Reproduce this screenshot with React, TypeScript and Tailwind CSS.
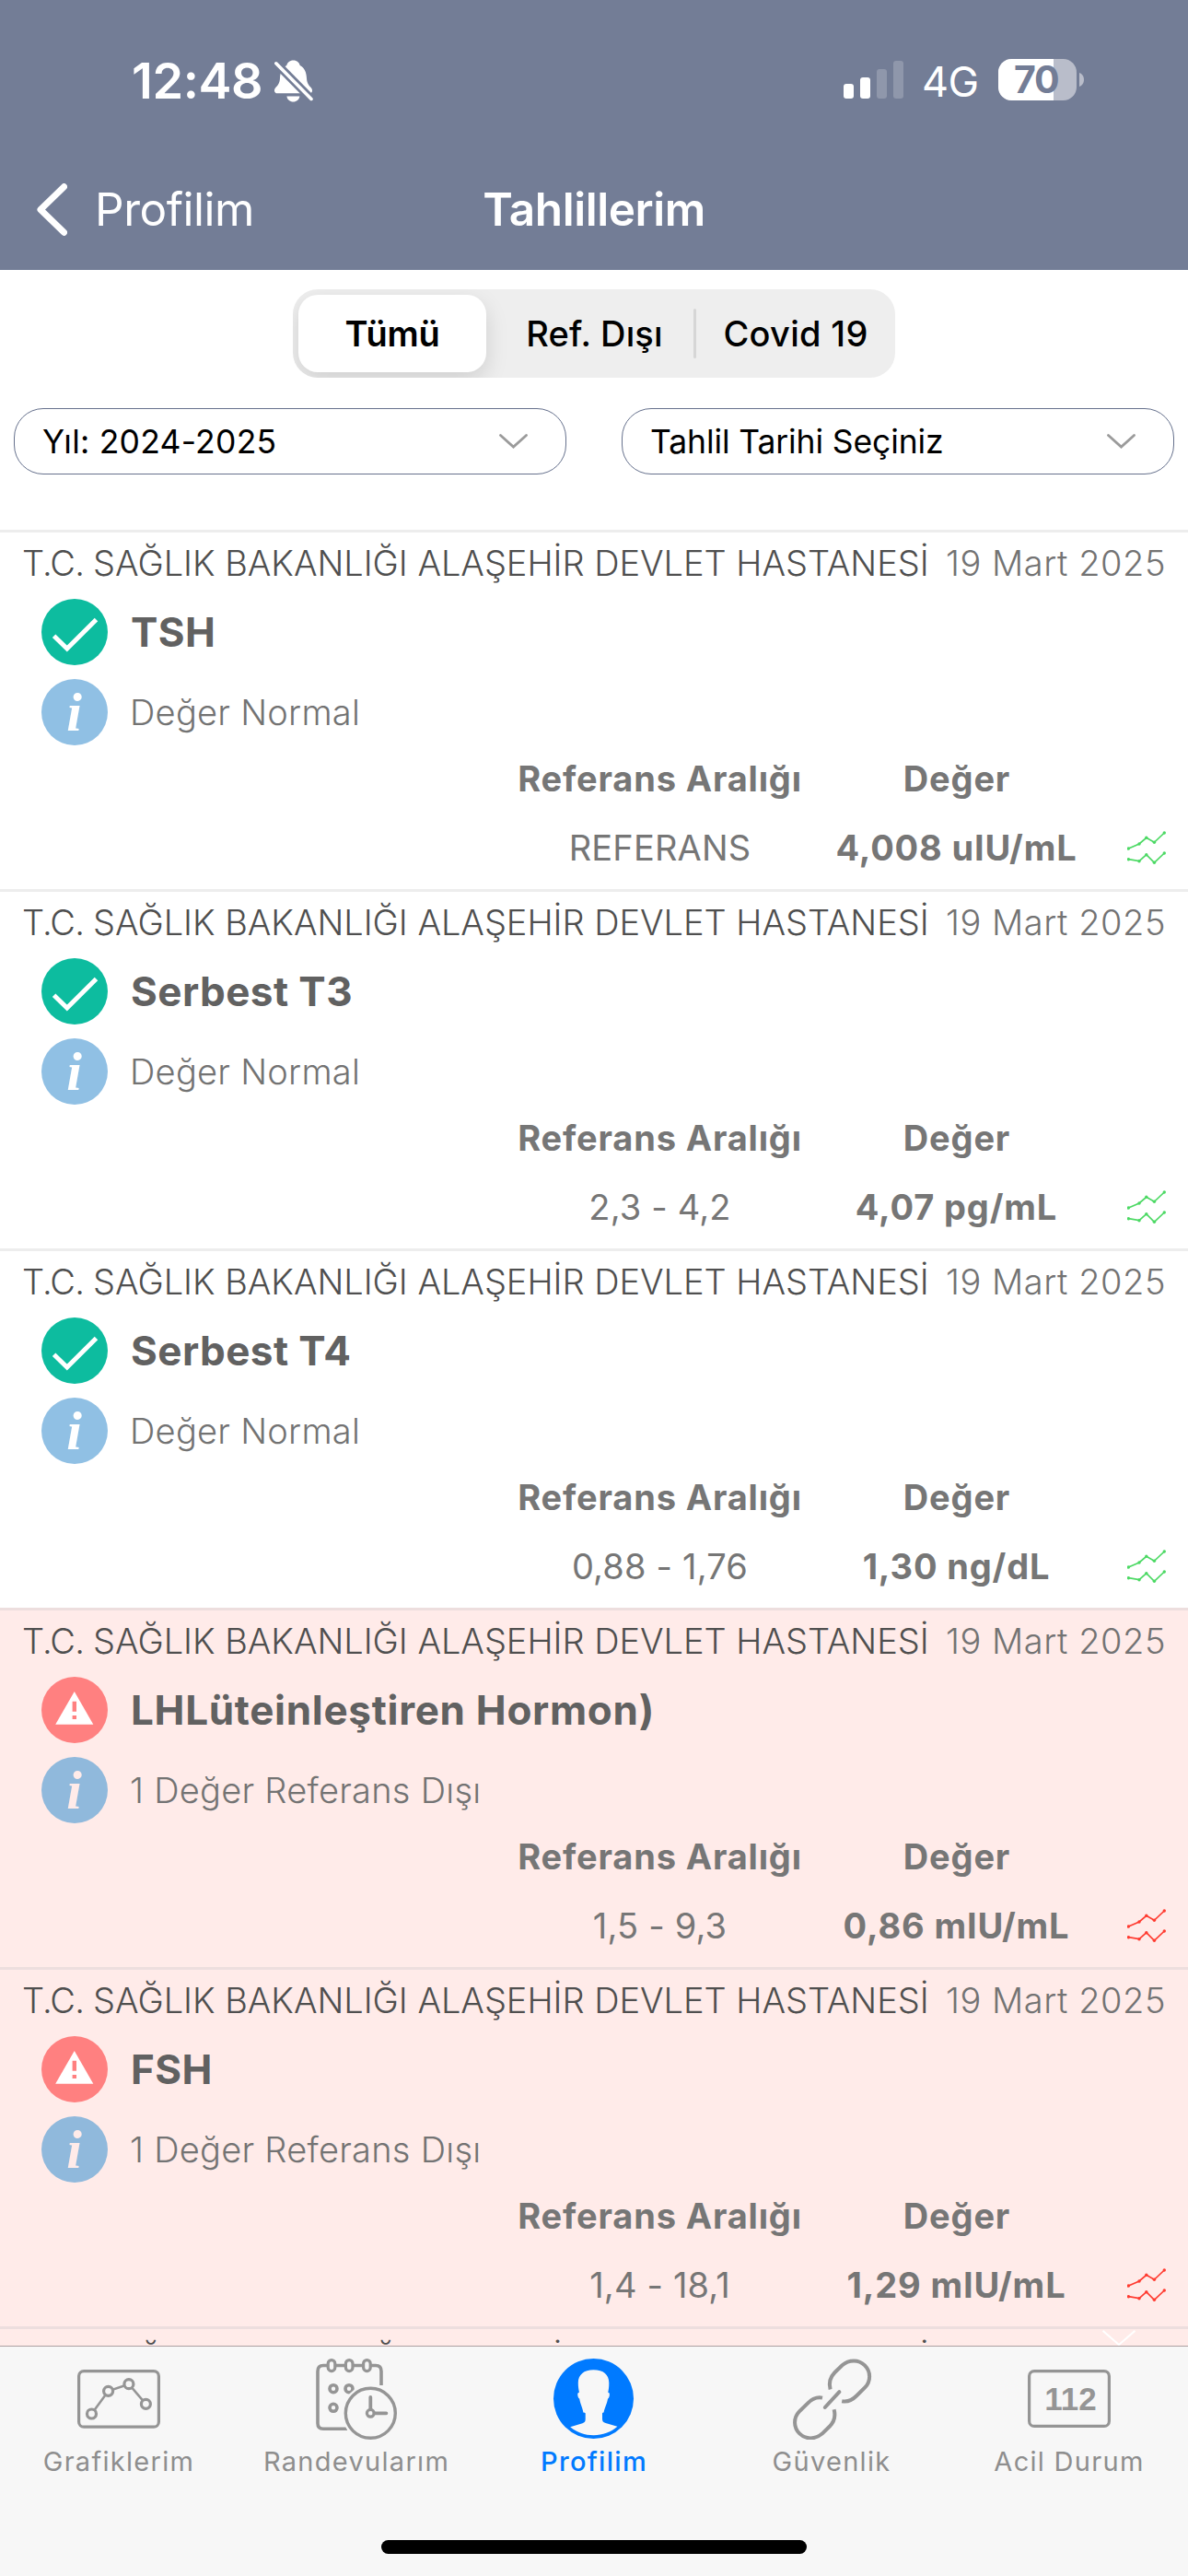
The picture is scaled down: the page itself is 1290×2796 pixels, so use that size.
import React from 'react';
import clsx from 'clsx';

interface TestResult {
  name: string;
  note: string;
  range: string;
  value: string;
  abnormal?: boolean;
}

const HOSPITAL = 'SAĞLIK BAKANLIĞI ALAŞEHİR DEVLET HASTANESİ';
const DATE = '19 Mart 2025';

const results: TestResult[] = [
  { name: 'TSH', note: 'Değer Normal', range: 'REFERANS', value: '4,008 uIU/mL' },
  { name: 'Serbest T3', note: 'Değer Normal', range: '2,3 - 4,2', value: '4,07 pg/mL' },
  { name: 'Serbest T4', note: 'Değer Normal', range: '0,88 - 1,76', value: '1,30 ng/dL' },
  {
    name: 'LHLüteinleştiren Hormon)',
    note: '1 Değer Referans Dışı',
    range: '1,5 - 9,3',
    value: '0,86 mIU/mL',
    abnormal: true,
  },
  { name: 'FSH', note: '1 Değer Referans Dışı', range: '1,4 - 18,1', value: '1,29 mIU/mL', abnormal: true },
];

function BellOff() {
  return (
    <svg className="mt-[3px] h-[46px] w-[42px]" viewBox="0 0 42 46" fill="none">
      <path
        d="M20.5 .5C16.5 .5 13.8 3 13.3 6C8.5 8.5 6.2 13.5 6 20C5.8 26 3 28 1 30.5C-1 33 0 36.3 3.2 36.3H37.8C41 36.3 42 33 40 30.5C38 28 35.2 26 35 20C34.8 13.5 32.5 8.5 27.7 6C27.2 3 24.5 .5 20.5 .5Z"
        fill="#fff"
      />
      <path d="M13.4 39.5H27.4C27 43 24 45.5 20.4 45.5S13.8 43 13.4 39.5Z" fill="#fff" />
      <path d="M-1 .8L42 44.4" stroke="#737d96" strokeWidth="9" />
      <path d="M1.8 3.8L40 42.4" stroke="#fff" strokeWidth="3.6" strokeLinecap="round" />
    </svg>
  );
}

function Battery() {
  return (
    <svg className="ml-5 h-[45px] w-[93px]" viewBox="0 0 93 45">
      <clipPath id="battery">
        <rect width="85" height="45" rx="14.5" />
      </clipPath>
      <g clipPath="url(#battery)">
        <rect width="85" height="45" fill="#b9bdca" />
        <rect width="60" height="45" fill="#fff" />
      </g>
      <path d="M88 15C91 16 93 19 93 22.5S91 29 88 30Z" fill="#b9bdca" />
      <text
        x="17"
        y="37"
        fill="#737d96"
        className="font-['Inter',sans-serif] text-[41px] font-bold tracking-[-1.2px]"
      >
        70
      </text>
    </svg>
  );
}

function Header() {
  return (
    <header className="h-[293px] shrink-0 bg-[#737d96] text-white">
      <div className="flex h-[173px] items-center pr-[113px] pl-[143px]">
        <span className="w-[155px] pt-[2px] text-[54px] leading-[64px] font-semibold tracking-[-0.42px]">12:48</span>
        <BellOff />
        <svg className="ml-auto h-[41px] w-[65px]" viewBox="0 0 65 41" fill="#fff">
          <rect y="25" width="11" height="16" rx="3" />
          <rect x="18" y="18" width="11" height="23" rx="3" />
          <rect x="36" y="9" width="11" height="32" rx="3" opacity=".2" />
          <rect x="54" width="11" height="41" rx="3" opacity=".2" />
        </svg>
        <span className="ml-5 w-[63px] pt-[5px] text-[45px] leading-[54px] tracking-[-0.57px]">4G</span>
        <Battery />
      </div>
      <div className="grid h-[120px] grid-cols-[1fr_auto_1fr] items-center pb-3 text-[49.5px] leading-[60px]">
        <div className="flex items-center gap-[30px] pl-10">
          <svg className="h-[57px] w-[33px]" viewBox="0 0 33 57" fill="none">
            <path
              d="M29.5 3.7L4 28.5L29.5 53.3"
              stroke="#fff"
              strokeWidth="7"
              strokeLinecap="round"
              strokeLinejoin="round"
            />
          </svg>
          <span className="tracking-[-0.48px]">Profilim</span>
        </div>
        <h1 className="font-semibold tracking-[-0.45px]">Tahlillerim</h1>
      </div>
    </header>
  );
}

function Select({ label, className }: { label: string; className: string }) {
  return (
    <div className="flex h-[72px] w-[600px] items-center justify-between rounded-[32px] border border-[#66718d] pr-[41px] pl-[30px]">
      <span className={clsx('pt-[2px] text-[35.5px] leading-[44px]', className)}>{label}</span>
      <svg className="h-4 w-[31px]" viewBox="0 0 31 16" fill="none">
        <path d="M1.5 1.5L15.5 14L29.5 1.5" stroke="#9b9b9b" strokeWidth="2.8" strokeLinecap="round" />
      </svg>
    </div>
  );
}

function Filters() {
  return (
    <section className="h-[282px] pt-[21px] text-black">
      <div className="mx-auto flex h-24 w-[654px] items-center overflow-hidden rounded-[27px] bg-[#eeeeee] text-[38px] leading-[46px] font-medium">
        <div className="w-[218px] pr-2 pl-[6px]">
          <div className="flex h-[84px] items-center justify-center rounded-[21px] bg-white font-semibold tracking-[-0.21px] shadow-[0_9px_24px_rgba(0,0,0,0.13)]">
            Tümü
          </div>
        </div>
        <div className="w-[217px] pl-[2px] text-center tracking-[0.17px]">Ref. Dışı</div>
        <div className="h-[54px] w-[3px] rounded-full bg-[#d6d6d6]" />
        <div className="flex-1 text-center tracking-[0.3px]">Covid 19</div>
      </div>
      <div className="mt-[33px] flex justify-between px-[15px]">
        <Select label="Yıl: 2024-2025" className="tracking-[0.24px]" />
        <Select label="Tahlil Tarihi Seçiniz" className="tracking-[-0.11px]" />
      </div>
    </section>
  );
}

function StatusIcon({ abnormal }: { abnormal?: boolean }) {
  if (abnormal) {
    return (
      <svg className="size-[72px]" viewBox="0 0 72 72">
        <circle cx="36" cy="36" r="36" fill="#ff8080" />
        <path d="M35.8 16L56.3 51.8H15.2Z" fill="#fff" />
        <path d="M33.6 26.7h4.4v11h-4.4zM33.6 42h4.4v4h-4.4z" fill="#ff8080" />
      </svg>
    );
  }
  return (
    <svg className="size-[72px]" viewBox="0 0 72 72" fill="none">
      <circle cx="36" cy="36" r="36" fill="#0dbc9f" />
      <path d="M13.6 40.2L27.8 54L59.5 22.4" stroke="#fff" strokeWidth="5" />
    </svg>
  );
}

function InfoIcon({ abnormal }: { abnormal?: boolean }) {
  return (
    <svg className="size-[72px]" viewBox="0 0 72 72">
      <circle cx="36" cy="36" r="36" fill={abnormal ? '#90b9dc' : '#90c0e4'} />
      <text
        x="35.5"
        y="56"
        textAnchor="middle"
        fill={abnormal ? '#ffebe9' : '#fff'}
        className="font-['Liberation_Serif',serif] text-[60px] font-bold italic"
      >
        i
      </text>
    </svg>
  );
}

function TrendIcon({ abnormal }: { abnormal?: boolean }) {
  const upper = [[1.4, 19], [13, 14], [20.8, 7.3], [29.4, 12.3], [40.3, 2]];
  const lower = [[1.4, 30.7], [13, 32.7], [20.8, 25.7], [29.4, 34.3], [40.3, 24]];
  const color = abnormal ? '#ff3b30' : '#4cd964';
  return (
    <svg className="ml-6 h-[38px] w-[42px]" viewBox="0 0 42 38" fill="none">
      {[upper, lower].map((line, i) => (
        <g key={i}>
          <polyline points={line.join(' ')} stroke={color} strokeWidth="1.7" />
          {line.map(([x, y]) => (
            <circle key={x} cx={x} cy={y} r="1.7" fill={color} />
          ))}
        </g>
      ))}
    </svg>
  );
}

function ResultHeading() {
  return (
    <div className="flex h-[66px] items-center justify-between pr-6 pl-6 text-[38px] leading-[66px] font-light whitespace-nowrap">
      <span className="tracking-[-0.04px] text-[#4f4f4f]">
        <span className="tracking-[-0.8px]">T.C. </span>
        {HOSPITAL}
      </span>
      <span className="tracking-[0.54px] text-[#737373]">{DATE}</span>
    </div>
  );
}

function ResultRow({ name, note, range, value, abnormal }: TestResult) {
  return (
    <article
      className={clsx(
        'h-[390px] border-t-3 text-[38px]',
        abnormal ? 'border-[#eddede] bg-[#ffebe9]' : 'border-[#ededed] bg-white'
      )}
    >
      <ResultHeading />
      <div className="flex h-[84px] items-center gap-[25px] pl-[45px]">
        <StatusIcon abnormal={abnormal} />
        <h2
          className={clsx(
            'text-[44px] leading-[84px] font-bold text-[#616161]',
            name.length > 12 ? 'tracking-[0.7px]' : 'tracking-[0.45px]'
          )}
        >
          {name}
        </h2>
      </div>
      <div className="flex h-[90px] items-center gap-6 pl-[45px]">
        <InfoIcon abnormal={abnormal} />
        <span className="leading-[90px] font-light tracking-[0.26px] text-[#737373]">{note}</span>
      </div>
      <div className="flex h-[55px] items-center pl-[556px] text-center leading-[55px] font-bold tracking-[0.83px] text-[#767676]">
        <span className="w-[321px]">Referans Aralığı</span>
        <span className="w-[324px]">Değer</span>
      </div>
      <div className="mt-[3px] flex h-[89px] items-center pl-[556px] text-center leading-[89px] text-[#767676]">
        <span className="w-[321px] tracking-[0.16px]">{range}</span>
        <span className="w-[323px] font-bold tracking-[0.85px]">{value}</span>
        <TrendIcon abnormal={abnormal} />
      </div>
    </article>
  );
}

function ChartIcon() {
  return (
    <g>
      <rect x="2.6" y="13.6" width="86.8" height="60.6" rx="5.5" />
      <path d="M16.5 60L34.6 35.3L56.9 27.7L75.4 49.3" strokeWidth="2.6" />
      <g fill="#f7f7f7">
        <circle cx="16.5" cy="60" r="5" />
        <circle cx="34.6" cy="35.3" r="5" />
        <circle cx="56.9" cy="27.7" r="5" />
        <circle cx="75.4" cy="49.3" r="5" />
      </g>
    </g>
  );
}

function CalendarIcon() {
  return (
    <g>
      <path d="M73 29V13.7Q73 7.5 67 7.5H10Q4 7.5 4 13.7V70.3Q4 76.3 10 76.3H36" strokeWidth="3.6" />
      <g fill="#f7f7f7">
        <rect x="15.2" y="1.6" width="7.6" height="12" rx="3.8" />
        <rect x="34.4" y="1.6" width="7.6" height="12" rx="3.8" />
        <rect x="53.6" y="1.6" width="7.6" height="12" rx="3.8" />
      </g>
      <circle cx="21" cy="32.7" r="4" strokeWidth="3.6" />
      <circle cx="38" cy="32.7" r="4" strokeWidth="3.6" />
      <circle cx="21" cy="53.3" r="4" strokeWidth="3.6" />
      <circle cx="61.3" cy="59.3" r="31" fill="#f7f7f7" stroke="none" />
      <circle cx="61.3" cy="59.3" r="27" strokeWidth="3.4" />
      <circle cx="61.3" cy="59.3" r="3.9" />
      <path d="M61.3 55V42M65.5 59.3H78.4" strokeWidth="3.8" strokeLinecap="round" />
    </g>
  );
}

function ProfileIcon() {
  return (
    <g stroke="none">
      <circle cx="45.5" cy="43.5" r="43.5" fill="#007aff" />
      <path
        d="M45.4 12.3C35 12.3 29 17.5 28.8 26C28.7 31 29.5 34 30 36.8C28.2 36.9 28 38.5 28.4 40.5C28.8 42.5 29.6 43.2 30.2 43.6C31.2 50 33.5 53 34.4 58.6C35.4 58.9 36.4 58.6 36.7 59.6V66C36.5 68.6 35.8 69.4 33.5 70.2L20.2 74.3C28 80.6 36 83.2 45.6 83.2C55.5 83.2 64 80.2 71.4 73.8L58.6 70C55.8 69 55.2 68 55 66V59.6C55.2 58.6 56 58.8 56.6 58.6C57.6 53 60 50 61 43.6C61.8 43.2 62.4 42.3 62.8 40.3C63.1 38.2 62.8 37 61.2 36.8C61.8 34 62.4 31 62.3 26C62.1 17.5 56.5 12.3 45.4 12.3Z"
        fill="#f7f7f7"
      />
    </g>
  );
}

function LinkIcon() {
  const loop = 'M44.6 33.5C42.8 27 44.4 20.2 49.5 15L57.5 7.2C65 .8 75.5 .8 82 7.4C88.8 14.2 88.8 24.6 82.2 31.4L73.5 40C69 44.6 63 47.4 57.2 46.2';
  return (
    <g strokeWidth="4">
      <path d={loop} />
      <path d={loop} transform="rotate(180 46.6 44.4)" />
      <path d="M38.8 53L54.4 36.2" strokeLinecap="round" />
    </g>
  );
}

function EmergencyIcon() {
  return (
    <g>
      <rect x="2.6" y="13.6" width="86.8" height="59.8" rx="5.5" />
      <text
        x="47.5"
        y="56"
        textAnchor="middle"
        fill="#959595"
        stroke="none"
        className="font-['Liberation_Sans',sans-serif] text-[35px] font-bold"
      >
        112
      </text>
    </g>
  );
}

const tabs = [
  { label: 'Grafiklerim', Icon: ChartIcon },
  { label: 'Randevularım', Icon: CalendarIcon },
  { label: 'Profilim', Icon: ProfileIcon, active: true },
  { label: 'Güvenlik', Icon: LinkIcon },
  { label: 'Acil Durum', Icon: EmergencyIcon },
];

function TabBar() {
  return (
    <footer className="h-[250px] shrink-0 border-t border-[#aca0a1] bg-[#f7f7f7] pt-[13px]">
      <nav className="grid grid-cols-5">
        {tabs.map(({ label, Icon, active }) => (
          <div key={label} className="flex flex-col items-center">
            <svg className="h-[88px] w-[92px]" viewBox="0 0 92 88" fill="none" stroke="#959595" strokeWidth="3.2">
              <Icon />
            </svg>
            <span
              className={clsx(
                'text-[29px] leading-[47px] tracking-[1.3px]',
                active ? 'font-medium text-[#007aff]' : 'text-[#8e8e8e]'
              )}
            >
              {label}
            </span>
          </div>
        ))}
      </nav>
      {/* Home indicator */}
      <div className="mx-auto mt-[62px] h-[15px] w-[462px] rounded-full bg-black" />
    </footer>
  );
}

export default function App() {
  return (
    <div className="flex h-[2796px] w-[1290px] flex-col overflow-hidden bg-white font-['Inter',sans-serif]">
      <Header />
      <main className="relative min-h-0 flex-1 overflow-hidden">
        <Filters />
        {results.map((result) => (
          <ResultRow key={result.name} {...result} />
        ))}
        {/* Next result, mostly hidden behind the tab bar */}
        <div className="h-[390px] border-t-3 border-[#eddede] bg-[#ffebe9]">
          <ResultHeading />
        </div>
        <svg className="absolute right-[57px] bottom-0 h-[17px] w-9" viewBox="0 0 36 17" fill="none">
          <path d="M.5 .8L18 16L35.5 .8" stroke="#fff" strokeWidth="2" />
        </svg>
      </main>
      <TabBar />
    </div>
  );
}
